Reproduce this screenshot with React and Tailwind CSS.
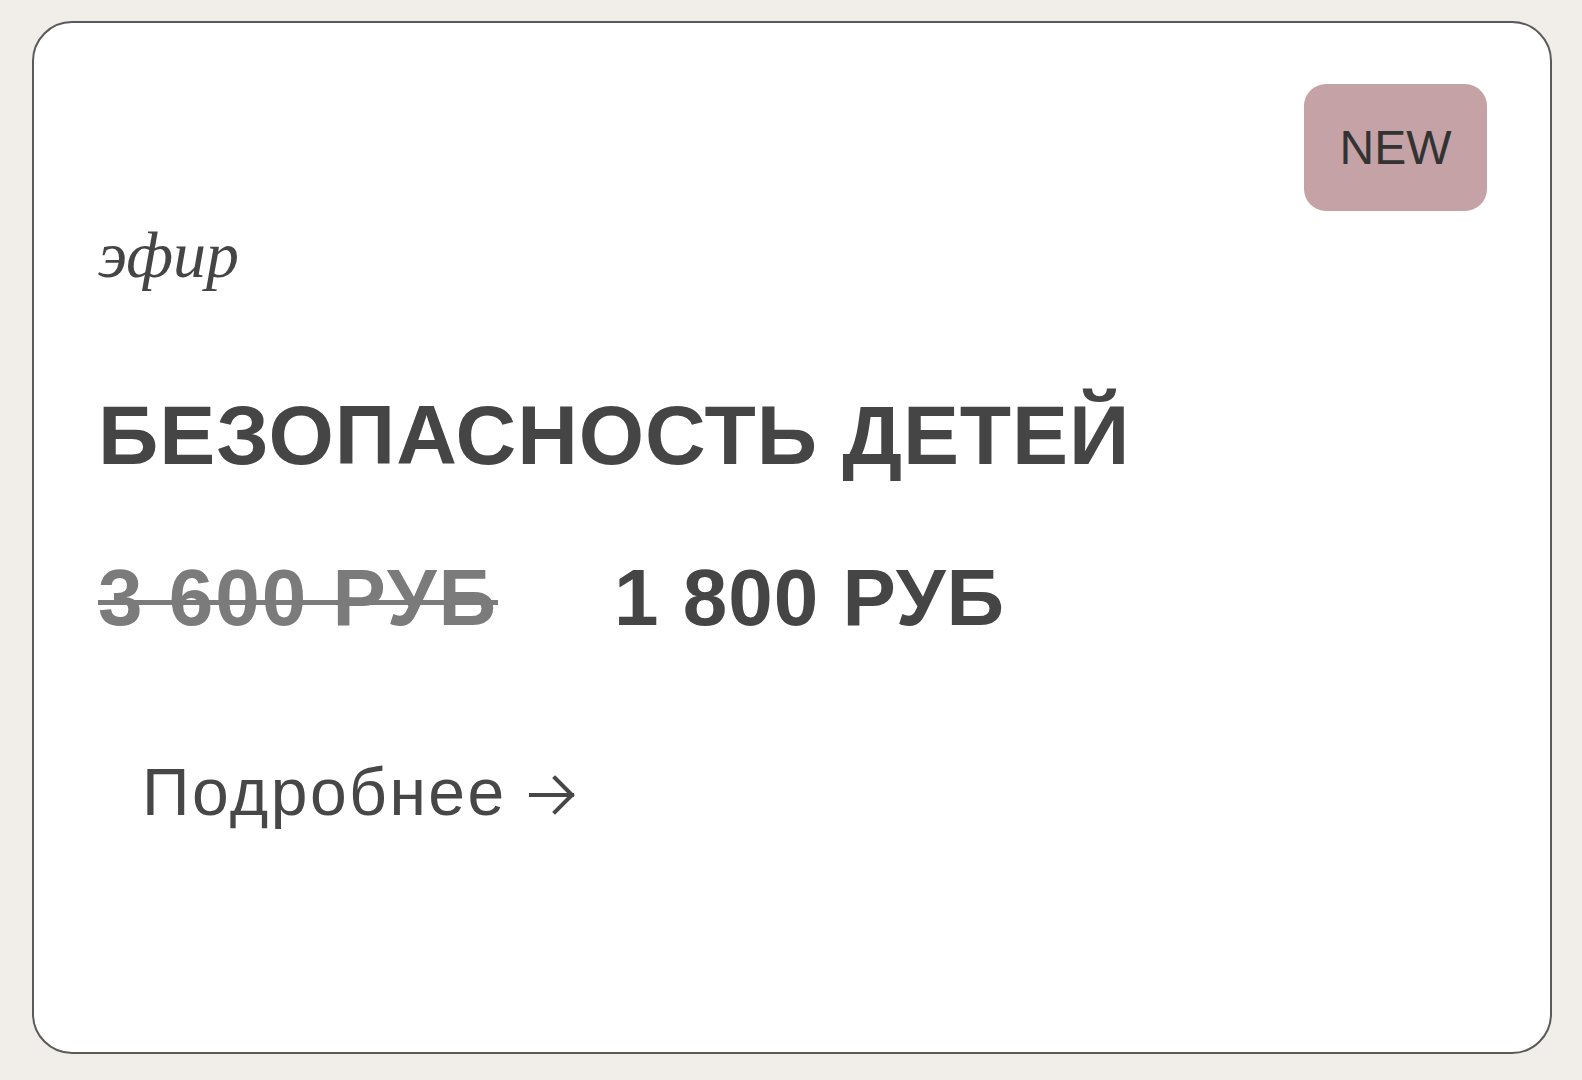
import { useState } from 'react'

const sans = { fontFamily: '"Liberation Sans", Arial, sans-serif' }

export default function App() {
  const [hover, setHover] = useState(false)

  return (
    <div className="min-h-screen bg-[#f1eee9] pt-[21px] pl-[32px]" style={sans}>
      <div className="w-[1520px] h-[1033px] rounded-[40px] border-2 border-[#5a5a5a] bg-white flex flex-col pl-[64px] pr-[63px]">
        <div className="flex justify-end pt-[61px]">
          <span className="w-[183px] h-[127px] rounded-[22px] bg-[#c4a2a6] flex items-center justify-center text-[48px] leading-none text-[#333333]">
            NEW
          </span>
        </div>

        <p
          className="mt-[11px] text-[66px] leading-none italic text-[#454545]"
          style={{ fontFamily: '"Liberation Serif", "Times New Roman", serif' }}
        >
          эфир
        </p>

        <h2 className="mt-[105px] text-[84px] leading-none font-bold tracking-[0.9px] text-[#454545]">
          БЕЗОПАСНОСТЬ ДЕТЕЙ
        </h2>

        <div className="mt-[81px] flex items-baseline gap-[116px] text-[80px] leading-none font-bold">
          {/* старая цена, зачёркнута линией поверх */}
          <span className="relative text-[#7b7b7b] tracking-[2px]">
            3 600 РУБ
            <span className="absolute left-0 right-0 top-[42px] h-[5px] bg-[#7b7b7b]" />
          </span>
          <span className="text-[#454545] tracking-[1px]">1 800 РУБ</span>
        </div>

        <button
          onMouseEnter={() => setHover(true)}
          onMouseLeave={() => setHover(false)}
          className="mt-[121px] ml-[44px] self-start text-[66px] leading-none tracking-[2.5px] text-[#474747] flex items-center gap-[22px]"
        >
          <span className={hover ? 'underline' : ''}>Подробнее</span>
          {/* стрелка */}
          <svg width="46" height="40" viewBox="0 0 46 40" fill="none" className="mt-[6px]">
            <path d="M2 20H43M26 3l17 17-17 17" stroke="#474747" strokeWidth="4" strokeLinecap="square" />
          </svg>
        </button>
      </div>
    </div>
  )
}
